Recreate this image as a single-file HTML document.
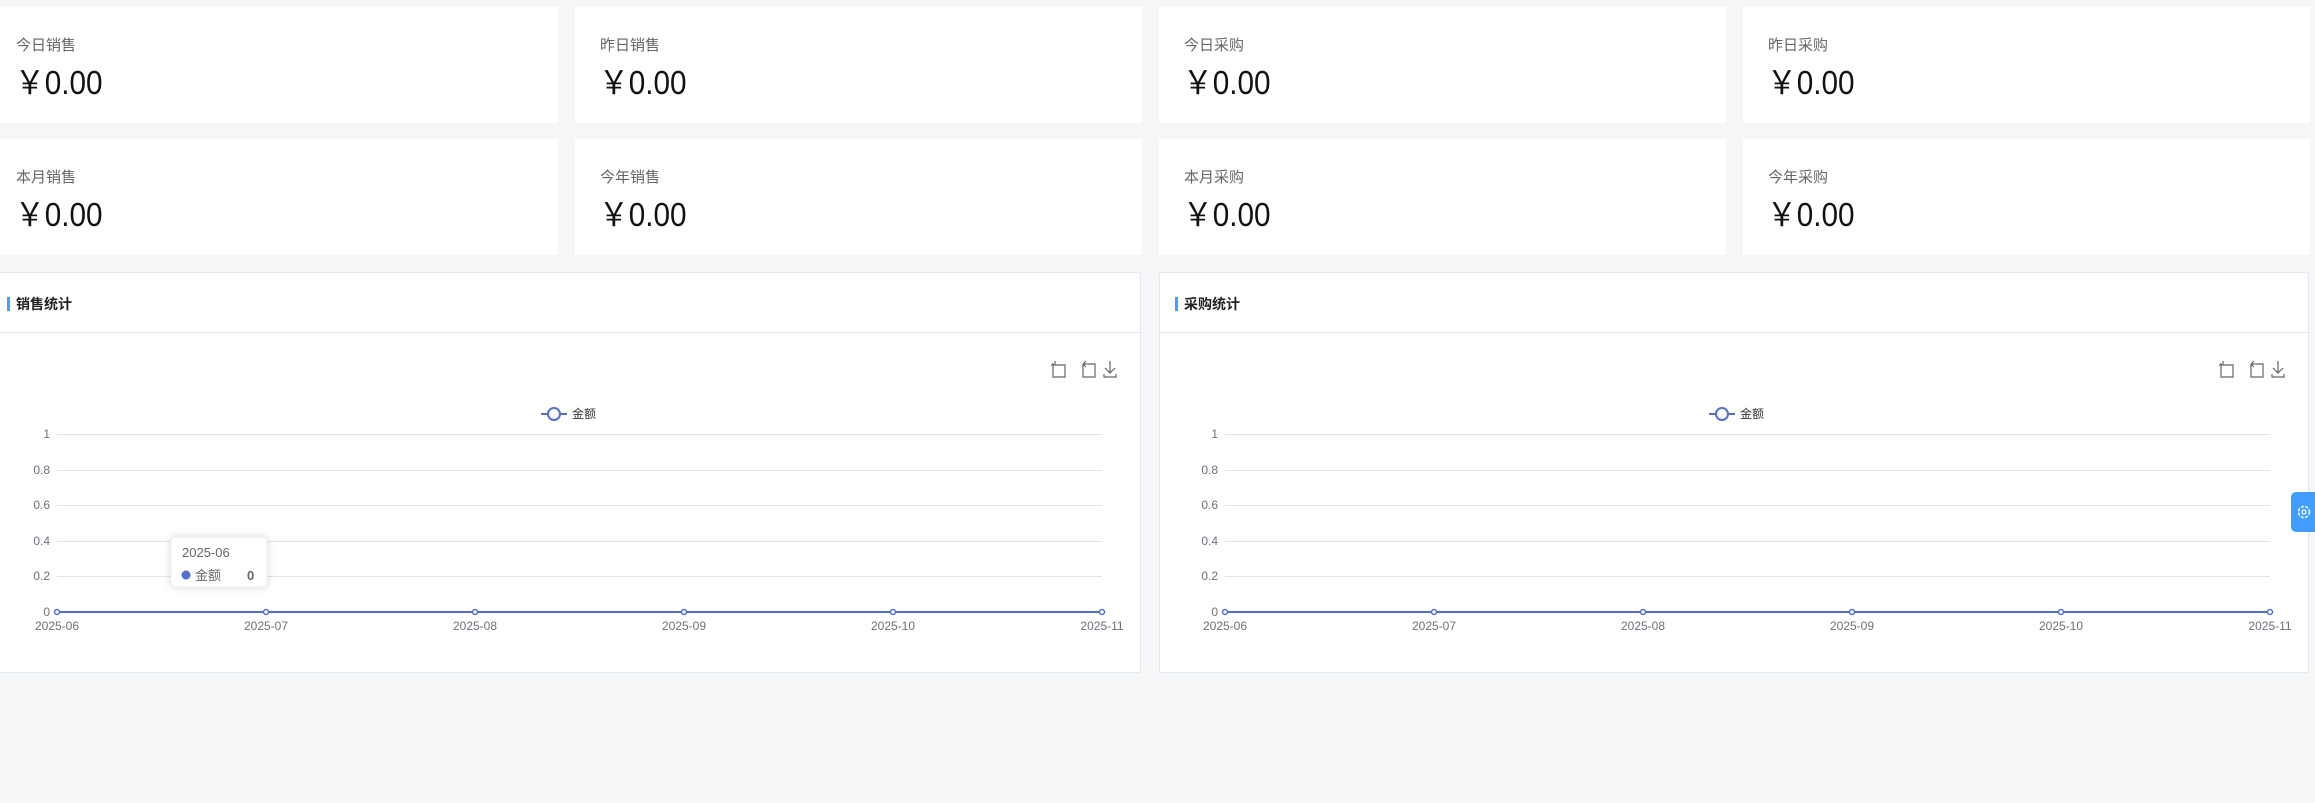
<!DOCTYPE html>
<html><head><meta charset="utf-8"><style>
*{margin:0;padding:0;box-sizing:border-box}
body{width:2315px;height:803px;background:#f5f6f8;position:relative;overflow:hidden;font-family:"Liberation Sans","Noto Sans CJK SC",sans-serif}
.card{position:absolute;background:#fff;height:116px;width:567px}
.card .l{position:absolute;left:25px;top:27px;font-size:15px;color:#666}
.card .v{position:absolute;left:24px;top:49px;font-size:33px;color:#111;transform:scaleX(.9);transform-origin:left}
.panel{position:absolute;top:272px;width:1150px;height:401px;background:#fff;border:1px solid #e4e7ed;border-radius:3px}
.panel .hd{position:absolute;left:0;right:0;top:0;height:60px;border-bottom:1px solid #e4e7ed}
.panel .bar{position:absolute;left:15px;top:24px;width:3px;height:14px;background:#409eff}
.panel .t{position:absolute;left:24px;top:21px;font-size:14px;font-weight:bold;color:#222}
svg text{font-family:"Liberation Sans","Noto Sans CJK SC",sans-serif}
.gear{position:absolute;left:2291px;top:492px;width:30px;height:40px;background:#409eff;border-radius:5px 0 0 5px}
</style></head><body>
<div class="card" style="left:-9px;top:7px"><div class="l">今日销售</div><div class="v">￥0.00</div></div>
<div class="card" style="left:575px;top:7px"><div class="l">昨日销售</div><div class="v">￥0.00</div></div>
<div class="card" style="left:1159px;top:7px"><div class="l">今日采购</div><div class="v">￥0.00</div></div>
<div class="card" style="left:1743px;top:7px"><div class="l">昨日采购</div><div class="v">￥0.00</div></div>
<div class="card" style="left:-9px;top:139px"><div class="l">本月销售</div><div class="v">￥0.00</div></div>
<div class="card" style="left:575px;top:139px"><div class="l">今年销售</div><div class="v">￥0.00</div></div>
<div class="card" style="left:1159px;top:139px"><div class="l">本月采购</div><div class="v">￥0.00</div></div>
<div class="card" style="left:1743px;top:139px"><div class="l">今年采购</div><div class="v">￥0.00</div></div>

<div class="panel" style="left:-9px">
<div class="hd"><div class="bar"></div><div class="t">销售统计</div></div>
<svg width="1150" height="401" style="position:absolute;left:0;top:0">
<g stroke="#e0e3ec" stroke-width="1"><line x1="65" x2="1110" y1="161.5" y2="161.5"/><line x1="65" x2="1110" y1="197.5" y2="197.5"/><line x1="65" x2="1110" y1="232.5" y2="232.5"/><line x1="65" x2="1110" y1="268.5" y2="268.5"/><line x1="65" x2="1110" y1="303.5" y2="303.5"/></g>
<g font-size="12" fill="#6e7079" text-anchor="end"><text x="58" y="165">1</text><text x="58" y="201">0.8</text><text x="58" y="236">0.6</text><text x="58" y="272">0.4</text><text x="58" y="307">0.2</text><text x="58" y="343">0</text></g>
<line x1="65" x2="1110" y1="339" y2="339" stroke="#5470c6" stroke-width="2"/>
<g fill="#fff" stroke="#5470c6" stroke-width="1.5"><circle cx="65" cy="339" r="2.5"/><circle cx="274" cy="339" r="2.5"/><circle cx="483" cy="339" r="2.5"/><circle cx="692" cy="339" r="2.5"/><circle cx="901" cy="339" r="2.5"/><circle cx="1110" cy="339" r="2.5"/></g>
<g font-size="12" fill="#6e7079" text-anchor="middle"><text x="65" y="357">2025-06</text><text x="274" y="357">2025-07</text><text x="483" y="357">2025-08</text><text x="692" y="357">2025-09</text><text x="901" y="357">2025-10</text><text x="1110" y="357">2025-11</text></g>
<line x1="549" x2="575" y1="141" y2="141" stroke="#5470c6" stroke-width="2"/><circle cx="562" cy="141" r="6" fill="#fff" stroke="#5470c6" stroke-width="2"/>
<text x="580" y="145" font-size="12" fill="#333">金额</text>
<g fill="none" stroke="#666" stroke-width="1.2"><path d="M1061 90v14h12v-12h-14M1063 88v4"/><path d="M1091 91h12v13h-12v-13M1091 91l3-3M1091 91l3 3" /><path d="M1118 88v12M1113 95l5 5 5-5M1112 101v3h12v-3"/></g>
<rect x="179" y="264" width="96" height="50" rx="4" fill="#fff" stroke="#eee" style="filter:drop-shadow(0 0 4px rgba(0,0,0,.15))"/>
<text x="190" y="284" font-size="13" fill="#666">2025-06</text>
<circle cx="194" cy="302" r="4.5" fill="#5470c6"/><text x="203" y="307" font-size="13" fill="#666">金额</text><text x="255" y="307" font-size="13" font-weight="bold" fill="#666">0</text>
</svg></div>

<div class="panel" style="left:1159px">
<div class="hd"><div class="bar"></div><div class="t">采购统计</div></div>
<svg width="1150" height="401" style="position:absolute;left:0;top:0">
<g stroke="#e0e3ec" stroke-width="1"><line x1="65" x2="1110" y1="161.5" y2="161.5"/><line x1="65" x2="1110" y1="197.5" y2="197.5"/><line x1="65" x2="1110" y1="232.5" y2="232.5"/><line x1="65" x2="1110" y1="268.5" y2="268.5"/><line x1="65" x2="1110" y1="303.5" y2="303.5"/></g>
<g font-size="12" fill="#6e7079" text-anchor="end"><text x="58" y="165">1</text><text x="58" y="201">0.8</text><text x="58" y="236">0.6</text><text x="58" y="272">0.4</text><text x="58" y="307">0.2</text><text x="58" y="343">0</text></g>
<line x1="65" x2="1110" y1="339" y2="339" stroke="#5470c6" stroke-width="2"/>
<g fill="#fff" stroke="#5470c6" stroke-width="1.5"><circle cx="65" cy="339" r="2.5"/><circle cx="274" cy="339" r="2.5"/><circle cx="483" cy="339" r="2.5"/><circle cx="692" cy="339" r="2.5"/><circle cx="901" cy="339" r="2.5"/><circle cx="1110" cy="339" r="2.5"/></g>
<g font-size="12" fill="#6e7079" text-anchor="middle"><text x="65" y="357">2025-06</text><text x="274" y="357">2025-07</text><text x="483" y="357">2025-08</text><text x="692" y="357">2025-09</text><text x="901" y="357">2025-10</text><text x="1110" y="357">2025-11</text></g>
<line x1="549" x2="575" y1="141" y2="141" stroke="#5470c6" stroke-width="2"/><circle cx="562" cy="141" r="6" fill="#fff" stroke="#5470c6" stroke-width="2"/>
<text x="580" y="145" font-size="12" fill="#333">金额</text>
<g fill="none" stroke="#666" stroke-width="1.2"><path d="M1061 90v14h12v-12h-14M1063 88v4"/><path d="M1091 91h12v13h-12v-13M1091 91l3-3M1091 91l3 3" /><path d="M1118 88v12M1113 95l5 5 5-5M1112 101v3h12v-3"/></g>
</svg></div>

<div class="gear"><svg width="24" height="40" style="position:absolute;left:0;top:0"><circle cx="13" cy="20" r="5.5" fill="none" stroke="#fff" stroke-width="1.5" stroke-dasharray="3 1.5"/><circle cx="13" cy="20" r="2" fill="none" stroke="#fff" stroke-width="1.3"/></svg></div>
</body></html>
